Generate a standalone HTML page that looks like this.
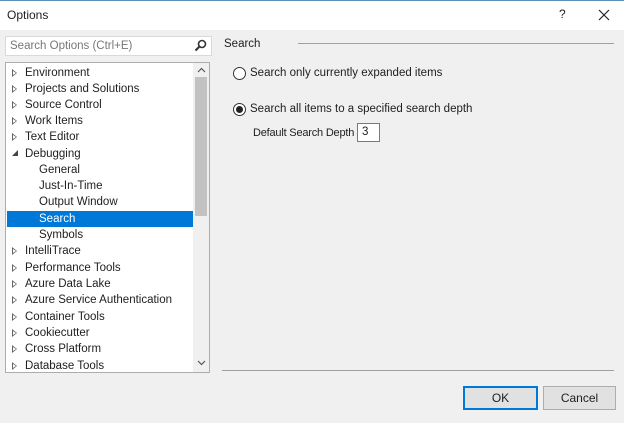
<!DOCTYPE html>
<html><head><style>
body{margin:0;width:624px;height:423px;background:#f0f0f0;font-family:"Liberation Sans",sans-serif;font-size:11.5px;color:#1e1e1e;position:relative;overflow:hidden}
.a{position:absolute}
.tb{left:0;top:0;width:624px;height:30px;background:#fff;border-top:1px solid #5b8fb3;box-sizing:border-box}
.it{position:absolute;left:1px;width:186px;height:16px;line-height:16px;white-space:nowrap}
.tri{position:absolute;left:5px;top:4px;width:0;height:0;border-left:5px solid #666;border-top:4px solid transparent;border-bottom:4px solid transparent}
.tri:after{content:"";position:absolute;left:-4px;top:-2px;border-left:3px solid #fff;border-top:2px solid transparent;border-bottom:2px solid transparent}
.btn{height:22px;width:71px;border:1px solid #adadad;background:#e1e1e1;text-align:center;line-height:22px;font-size:12px}
.rad{width:11px;height:11px;border:1px solid #333;border-radius:50%;background:#fff}
</style></head><body>
<div class="a tb"></div>
<div class="a" style="left:7px;top:8px;font-size:12px">Options</div>
<div class="a" style="left:559px;top:7px;font-size:12px">?</div>
<svg class="a" style="left:598px;top:9px" width="12" height="12"><path d="M1 1L11 11M11 1L1 11" stroke="#222" stroke-width="1.2"/></svg>
<div class="a" style="left:5px;top:36px;width:207px;height:20px;border:1px solid #d9d9d9;background:#fff;box-sizing:border-box;color:#777;line-height:18px;padding-left:4px">Search Options (Ctrl+E)</div>
<svg class="a" style="left:194px;top:39px" width="13" height="13"><circle cx="8" cy="5" r="3.5" fill="none" stroke="#333" stroke-width="1.6"/><line x1="5.5" y1="7.5" x2="1.5" y2="11.5" stroke="#333" stroke-width="2"/></svg>
<div class="a" style="left:5px;top:62px;width:205px;height:311px;border:1px solid #adadad;background:#fff;box-sizing:border-box;overflow:hidden">
<div class="a" style="left:187px;top:0;width:16px;height:309px;background:#f0f0f0"></div>
<div class="a" style="left:189px;top:14px;width:12px;height:139px;background:#c2c2c2"></div>
<svg class="a" style="left:191px;top:4px" width="9" height="6"><path d="M1 5L4.5 1.5L8 5" fill="none" stroke="#555" stroke-width="1.2"/></svg>
<svg class="a" style="left:191px;top:297px" width="9" height="6"><path d="M1 1L4.5 4.5L8 1" fill="none" stroke="#555" stroke-width="1.2"/></svg>
<div class="it" style="top:2px"><span class="tri"></span><span style="margin-left:18px">Environment</span></div>
<div class="it" style="top:18px"><span class="tri"></span><span style="margin-left:18px">Projects and Solutions</span></div>
<div class="it" style="top:34px"><span class="tri"></span><span style="margin-left:18px">Source Control</span></div>
<div class="it" style="top:50px"><span class="tri"></span><span style="margin-left:18px">Work Items</span></div>
<div class="it" style="top:66px"><span class="tri"></span><span style="margin-left:18px">Text Editor</span></div>
<div class="it" style="top:83px"><span class="a" style="left:5px;top:4px;border-right:6px solid #444;border-top:6px solid transparent"></span><span style="margin-left:18px">Debugging</span></div>
<div class="it" style="top:99px"><span style="margin-left:32px">General</span></div>
<div class="it" style="top:115px"><span style="margin-left:32px">Just-In-Time</span></div>
<div class="it" style="top:131px"><span style="margin-left:32px">Output Window</span></div>
<div class="it" style="top:148px;background:#0078d7;color:#fff"><span style="margin-left:32px">Search</span></div>
<div class="it" style="top:164px"><span style="margin-left:32px">Symbols</span></div>
<div class="it" style="top:180px"><span class="tri"></span><span style="margin-left:18px">IntelliTrace</span></div>
<div class="it" style="top:197px"><span class="tri"></span><span style="margin-left:18px">Performance Tools</span></div>
<div class="it" style="top:213px"><span class="tri"></span><span style="margin-left:18px">Azure Data Lake</span></div>
<div class="it" style="top:229px"><span class="tri"></span><span style="margin-left:18px">Azure Service Authentication</span></div>
<div class="it" style="top:246px"><span class="tri"></span><span style="margin-left:18px">Container Tools</span></div>
<div class="it" style="top:262px"><span class="tri"></span><span style="margin-left:18px">Cookiecutter</span></div>
<div class="it" style="top:278px"><span class="tri"></span><span style="margin-left:18px">Cross Platform</span></div>
<div class="it" style="top:295px"><span class="tri"></span><span style="margin-left:18px">Database Tools</span></div>
</div>
<div class="a" style="left:224px;top:38px">Search</div>
<div class="a" style="left:298px;top:43px;width:316px;height:1px;background:#a0a0a0"></div>
<div class="a rad" style="left:233px;top:67px"></div>
<div class="a" style="left:250px;top:67px">Search only currently expanded items</div>
<div class="a rad" style="left:233px;top:103px"><div class="a" style="left:2px;top:2px;width:7px;height:7px;border-radius:50%;background:#222"></div></div>
<div class="a" style="left:250px;top:103px">Search all items to a specified search depth</div>
<div class="a" style="left:253px;top:127px;letter-spacing:-0.2px;font-size:11px">Default Search Depth</div>
<div class="a" style="left:357px;top:123px;width:23px;height:19px;border:1px solid #7a7a7a;background:#fff;box-sizing:border-box;padding-left:4px;line-height:17px">3</div>
<div class="a" style="left:222px;top:370px;width:392px;height:1px;background:#a0a0a0"></div>
<div class="a btn" style="left:463px;top:386px;border:2px solid #0078d7;height:20px;line-height:20px">OK</div>
<div class="a btn" style="left:543px;top:386px">Cancel</div>
</body></html>
